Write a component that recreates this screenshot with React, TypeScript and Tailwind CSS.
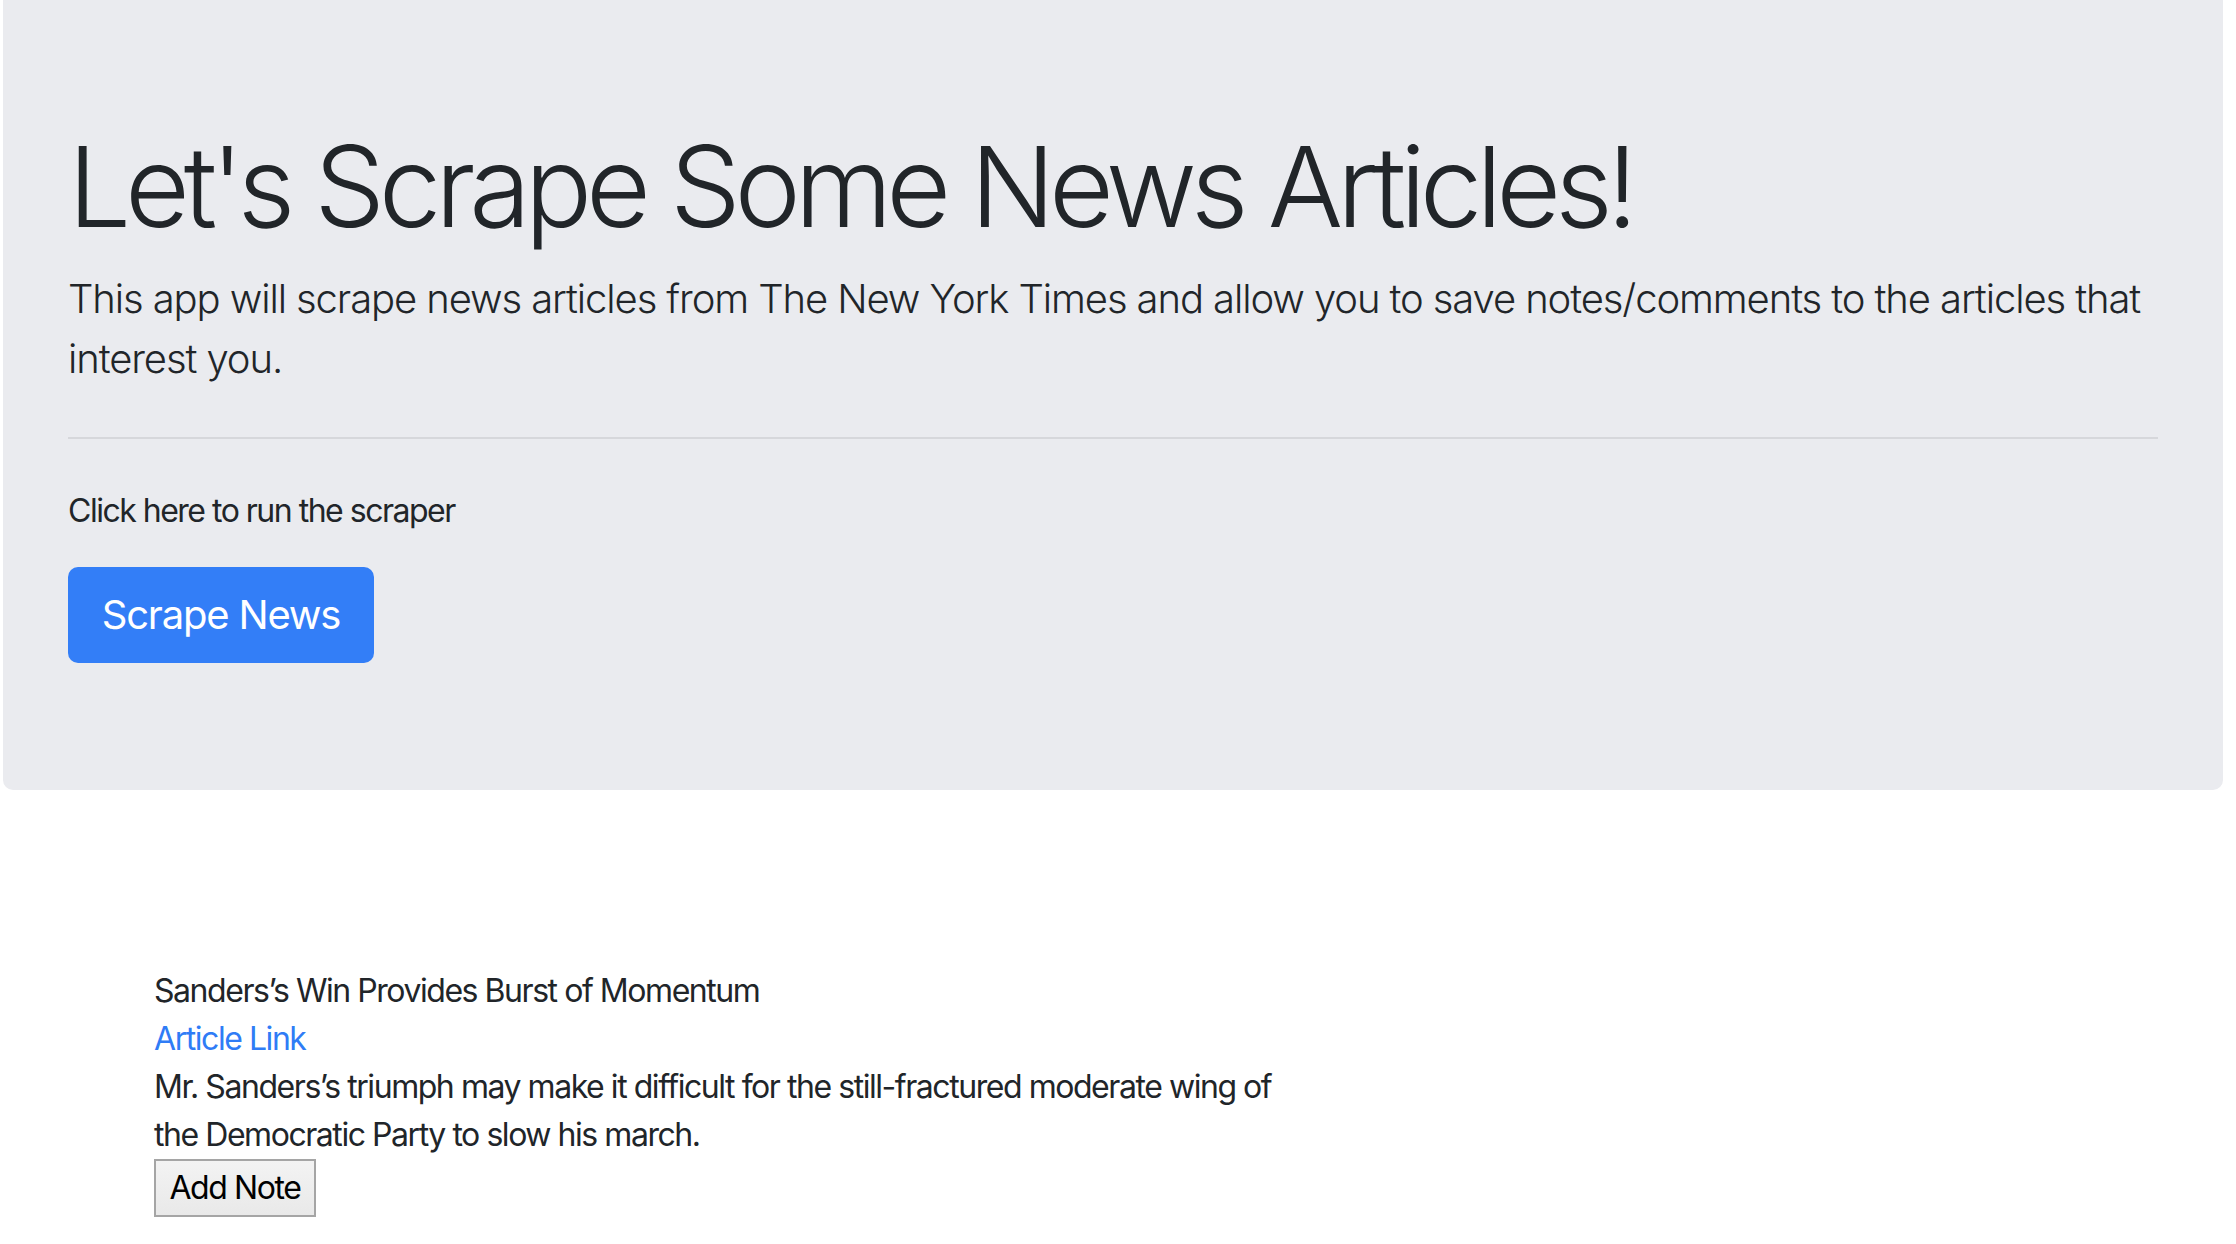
import React from "react";

export default function App() {
  const font = { fontFamily: "Inter, 'Noto Sans', sans-serif" };
  return (
    <div className="min-h-[1244px] w-full bg-white text-[#212529]" style={font}>
      <div className="ml-[3px] w-[2220px] rounded-b-[10px] bg-[#eaebef] px-[65px] pt-[119px] pb-[127px]">
        <h1 className="text-[112px] font-light leading-[134px] tracking-[-6.2px] mb-[16px]">
          Let's Scrape Some News Articles!
        </h1>
        <p className="text-[40px] font-light leading-[60px] tracking-[-1.1px] mb-[32px]">
          This app will scrape news articles from The New York Times and allow you to save notes/comments to the articles that interest you.
        </p>
        <hr className="my-[48px] border-t-2 border-[#d6d7db]" />
        <p className="text-[32px] leading-[48px] tracking-[-1.5px] mb-[32px]">Click here to run the scraper</p>
        <button className="h-[96px] w-[306px] rounded-[10px] bg-[#337ef7] text-center text-white text-[40px] leading-[60px] tracking-[-1.2px]">
          Scrape News
        </button>
      </div>
      <div className="ml-[154px] mt-[177px] w-[1140px] text-[32px] leading-[48px] tracking-[-1.45px]">
        <div>Sanders’s Win Provides Burst of Momentum</div>
        <div>
          <a href="#" className="text-[#2f7cf6]">Article Link</a>
        </div>
        <div>Mr. Sanders’s triumph may make it difficult for the still-fractured moderate wing of the Democratic Party to slow his march.</div>
        <button className="h-[58px] w-[162px] border-2 border-[#a5a5a5] bg-gradient-to-b from-[#f3f3f3] to-[#e9e9e9] text-center text-[32px] leading-[38px] text-black tracking-[-1.4px]">
          Add Note
        </button>
      </div>
    </div>
  );
}
